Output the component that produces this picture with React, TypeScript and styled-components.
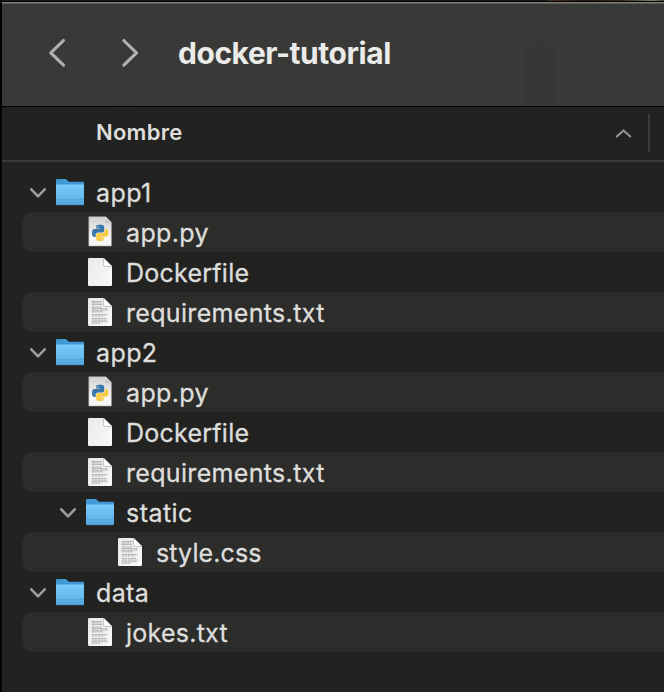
import React from 'react';
import styled, { createGlobalStyle, css } from 'styled-components';

const Global = createGlobalStyle`
  * { box-sizing: border-box; }
  body { margin: 0; background: #222220; font-family: Inter, "Liberation Sans", sans-serif; overflow: hidden; }
`;

const Window = styled.main`
  width: 664px;
  height: 692px;
  display: flex;
  flex-direction: column;
  background: #222220;
  border-left: 2px solid #020202;
`;

const Backdrop = styled.div`
  height: 2px;
  flex: none;
  border-bottom: 1px solid #050505;
  background: linear-gradient(90deg, #171714 545px, #4a3322 546px, #24160c 580px, #3c2a18 620px, #7e8068 650px, #4b4a35);
`;

const Toolbar = styled.header`
  height: 105px;
  flex: none;
  display: flex;
  align-items: flex-start;
  padding: 33px 0 0 45px;
  border-bottom: 1px solid #000;
  background:
    linear-gradient(#7d7d7a 0 1px, #5d5d5a 1px 2px, transparent 2px),
    radial-gradient(17px 17px at 538px 56px, #373735 98%, transparent) no-repeat,
    linear-gradient(#373735, #373735) 521px 56px / 34px 48px no-repeat,
    linear-gradient(#383836, #383836) 105px 52px / 34px 52px no-repeat,
    #393937;
`;

const NavButton = styled.button<{ $gap: number }>`
  width: 24px;
  height: 36px;
  padding: 0;
  margin-right: ${p => p.$gap}px;
  border: 0;
  background: none;
  color: #b1b1af;
  svg { display: block; }
`;

const Title = styled.h1`
  margin: 0;
  font-size: 30px;
  line-height: 36px;
  font-weight: 700;
  letter-spacing: -0.45px;
  color: #ebebe9;
  white-space: nowrap;
`;

const ColumnHeader = styled.div`
  height: 55px;
  flex: none;
  display: flex;
  align-items: flex-start;
  padding: 7px 14px 0 94px;
  border-bottom: 2px solid #3a3a38;
`;

const ColumnLabel = styled.div`
  flex: 1;
  font-size: 22px;
  line-height: 36px;
  font-weight: 600;
  letter-spacing: 0.25px;
  color: #dededc;
`;

const SortMark = styled.svg`
  margin: 13px 15px 0 0;
`;

const Divider = styled.div`
  width: 2px;
  height: 38px;
  background: #3a3a38;
`;

const Tree = styled.ul`
  margin: 0;
  padding: 10px 0 0 20px;
  list-style: none;
`;

const Row = styled.li<{ $depth: number; $striped: boolean }>`
  height: 40px;
  display: flex;
  align-items: center;
  padding-left: ${p => p.$depth * 30 + 6}px;
  border-radius: 10px 0 0 10px;
  ${p => p.$striped && css`background: #2c2c2b;`}
`;

const Disclosure = styled.span`
  width: 20px;
  height: 40px;
  margin-right: 6px;
`;

const IconSlot = styled.span`
  width: 32px;
  height: 40px;
  margin-right: 10px;
`;

const Name = styled.span<{ $spacing: number }>`
  padding-top: 2px;
  font-size: 25px;
  line-height: 38px;
  letter-spacing: ${p => p.$spacing}px;
  color: #dededc;
  -webkit-text-stroke: 0.3px #dededc;
  white-space: nowrap;
`;

const snake = 'M14.25.18l.9.2.73.26.59.3.45.32.34.34.25.34.16.33.1.3.04.26.02.2-.01.13V8.5l-.05.63-.13.55-.21.46-.26.38-.3.31-.33.25-.35.19-.35.14-.33.1-.3.07-.26.04-.21.02H8.77l-.69.05-.59.14-.5.22-.41.27-.33.32-.27.35-.2.36-.15.37-.1.35-.07.32-.04.27-.02.21v3.06H3.17l-.21-.03-.28-.07-.32-.12-.35-.18-.36-.26-.36-.36-.35-.46-.32-.59-.28-.73-.21-.88-.14-1.05-.05-1.23.06-1.22.16-1.04.24-.87.32-.71.36-.57.4-.44.42-.33.42-.24.4-.16.36-.1.32-.05.24-.01h.16l.06.01h8.16v-.83H6.18l-.01-2.75-.02-.37.05-.34.11-.31.17-.28.25-.26.31-.23.38-.2.44-.18.51-.15.58-.12.64-.1.71-.06.77-.04.84-.02 1.27.05zm-6.3 1.98l-.23.33-.08.41.08.41.23.34.33.22.41.09.41-.09.33-.22.23-.34.08-.41-.08-.41-.23-.33-.33-.22-.41-.09-.41.09z';

type Kind = 'folder' | 'python' | 'blank' | 'text';

function FolderIcon() {
  return (
    <svg width="32" height="40" viewBox="0 0 32 40">
      <defs>
        <linearGradient id="folderFront" x1="0" y1="0" x2="0" y2="1">
          <stop offset="0" stopColor="#7bcbfa" />
          <stop offset="1" stopColor="#58ade4" />
        </linearGradient>
      </defs>
      <path d="M2 8.2Q2 7 3.2 7H11.2Q12.3 7 13 8L14.2 9.2Q14.8 9.8 16 9.8H28.8Q30 9.8 30 11V31H2Z" fill="#4199d6" />
      <path d="M2 13.4Q2 12.4 3 12.4H29Q30 12.4 30 13.4V31.7Q30 33 28.7 33H3.3Q2 33 2 31.7Z" fill="url(#folderFront)" />
      <path d="M2 27.5H30M2 30.3H30" stroke="#4b9fd6" strokeWidth=".8" />
      <path d="M2.6 32.8H29.4" stroke="#3d8cc4" strokeWidth=".8" />
    </svg>
  );
}

function PageIcon({ kind }: { kind: Kind }) {
  return (
    <svg width="32" height="40" viewBox="0 0 32 40">
      <defs>
        <linearGradient id="paper" x1="0" y1="0" x2="1" y2="1">
          <stop offset="0" stopColor="#e9e9e9" />
          <stop offset="1" stopColor="#fafafa" />
        </linearGradient>
        <linearGradient id="pyPaper" x1="0" y1="0" x2="0" y2="1">
          <stop offset="0" stopColor="#cfcfcf" />
          <stop offset=".7" stopColor="#f6f6f6" />
        </linearGradient>
      </defs>
      {kind === 'python' ? (
        <>
          <path d="M4.8 4.7H21.6L27.4 10.6V34H4.8Z" fill="url(#pyPaper)" stroke="#aaa" strokeWidth=".5" />
          <path d="M21.6 4.7V10.6H27.4Z" fill="#fff" />
          <path d="M21.3 10.9H27.2L22 6Z" fill="#999" opacity=".55" />
          <g transform="translate(8 12.7) scale(.68)">
            <path d={snake} fill="#3976ab" />
            <path d={snake} fill="#f7cd46" transform="rotate(180 12 12)" />
          </g>
        </>
      ) : (
        <>
          <path d="M4 7.3Q4 6 5.3 6H19.6L28 14.2V32.7Q28 34 26.7 34H5.3Q4 34 4 32.7Z" fill="url(#paper)" />
          <path d="M19.6 6V12.6Q19.6 14.2 21.2 14.2H28Z" fill="#fff" />
          <path d="M19.4 6.5V12.8Q19.4 14.4 21 14.4H27.6" fill="none" stroke="#a9a9a9" strokeWidth=".7" />
        </>
      )}
      {kind === 'text' && (
        <g fill="none" stroke="#9c9c9c" strokeWidth=".8">
          <path d="M7.8 9.5H17.8M7.8 11H17.6M7.8 12.5H17.8M7.8 15H18M7.8 16.6H23.8M7.8 18.2H23.6M7.8 19.8H19" strokeDasharray="3 .4 1.6 .4 2.3 .3" />
          <path d="M7.8 22.4H23.6M7.8 24H21M7.8 26.5H22.8M7.8 28.1H23.8M7.8 29.7H23.4M7.8 31.2H17" strokeDasharray="2.1 .4 3.2 .5" />
        </g>
      )}
    </svg>
  );
}

const items: { name: string; kind: Kind; depth: number; spacing: number }[] = [
  { name: 'app1', kind: 'folder', depth: 0, spacing: 0.4 },
  { name: 'app.py', kind: 'python', depth: 1, spacing: 0.35 },
  { name: 'Dockerfile', kind: 'blank', depth: 1, spacing: 0.25 },
  { name: 'requirements.txt', kind: 'text', depth: 1, spacing: 0.33 },
  { name: 'app2', kind: 'folder', depth: 0, spacing: 0.4 },
  { name: 'app.py', kind: 'python', depth: 1, spacing: 0.35 },
  { name: 'Dockerfile', kind: 'blank', depth: 1, spacing: 0.25 },
  { name: 'requirements.txt', kind: 'text', depth: 1, spacing: 0.33 },
  { name: 'static', kind: 'folder', depth: 1, spacing: 0.45 },
  { name: 'style.css', kind: 'text', depth: 2, spacing: 0.12 },
  { name: 'data', kind: 'folder', depth: 0, spacing: 0.35 },
  { name: 'jokes.txt', kind: 'text', depth: 1, spacing: 0.25 },
];

export default function App() {
  return (
    <>
      <Global />
      <Window>
        <Backdrop />
        <Toolbar>
          <NavButton $gap={48} aria-label="Back">
            <svg width="24" height="36" viewBox="0 0 24 36"><path d="M16.5 5.5L3.8 17.8L16.5 30.1" fill="none" stroke="currentColor" strokeWidth="3.1" strokeLinecap="round" strokeLinejoin="round" /></svg>
          </NavButton>
          <NavButton $gap={35} aria-label="Forward">
            <svg width="24" height="36" viewBox="0 0 24 36"><path d="M4.8 5.5L17.5 17.8L4.8 30.1" fill="none" stroke="currentColor" strokeWidth="3.1" strokeLinecap="round" strokeLinejoin="round" /></svg>
          </NavButton>
          <Title>docker-tutorial</Title>
        </Toolbar>
        <ColumnHeader>
          <ColumnLabel>Nombre</ColumnLabel>
          <SortMark width="20" height="14" viewBox="0 0 20 14"><path d="M3.2 10L10.5 3.5L17.8 10" fill="none" stroke="#979795" strokeWidth="2" /></SortMark>
          <Divider />
        </ColumnHeader>
        <Tree>
          {items.map((item, i) => (
            <Row key={i} $depth={item.depth} $striped={i % 2 === 1}>
              <Disclosure>
                {item.kind === 'folder' && (
                  <svg width="20" height="40" viewBox="0 0 20 40"><path d="M3.3 17.3L10 24.3L16.7 17.3" fill="none" stroke="#9d9d9b" strokeWidth="2.6" strokeLinecap="round" strokeLinejoin="round" /></svg>
                )}
              </Disclosure>
              <IconSlot>{item.kind === 'folder' ? <FolderIcon /> : <PageIcon kind={item.kind} />}</IconSlot>
              <Name $spacing={item.spacing}>{item.name}</Name>
            </Row>
          ))}
        </Tree>
      </Window>
    </>
  );
}
